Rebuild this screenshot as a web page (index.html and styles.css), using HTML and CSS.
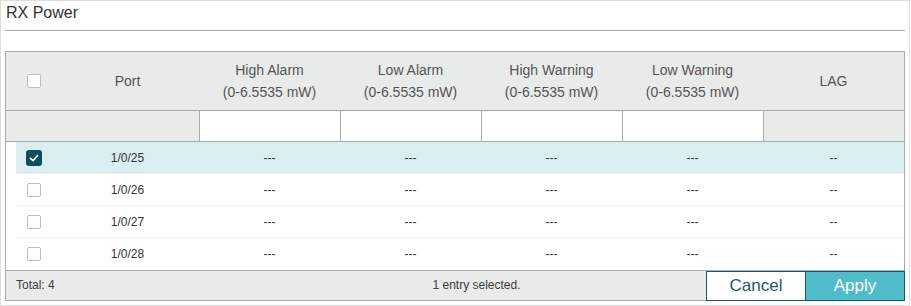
FILE: index.html
```html
<!DOCTYPE html>
<html lang="en">
  <head>
    <meta charset="UTF-8" />
    <meta name="viewport" content="width=device-width, initial-scale=1.0" />
    <title>RX Power</title>
    <link rel="stylesheet" href="styles.css">
  </head>
  <body>
    <div class="panel">
      <div class="panel-title">RX Power</div>

      <div class="grid">
        <div class="row head">
          <div class="cell chk"><span class="box"></span></div>
          <div class="cell">Port</div>
          <div class="cell">High Alarm<br />(0-6.5535 mW)</div>
          <div class="cell">Low Alarm<br />(0-6.5535 mW)</div>
          <div class="cell">High Warning<br />(0-6.5535 mW)</div>
          <div class="cell">Low Warning<br />(0-6.5535 mW)</div>
          <div class="cell">LAG</div>
        </div>

        <div class="row filter">
          <div class="cell blank"></div>
          <div class="cell field"><input type="text" /></div>
          <div class="cell field"><input type="text" /></div>
          <div class="cell field"><input type="text" /></div>
          <div class="cell field"><input type="text" /></div>
          <div class="cell field off"></div>
        </div>

        <div class="rows">
          <div class="row item selected">
            <div class="cell chk">
              <span class="box checked">
                <svg viewBox="0 0 16 16" width="16" height="16"><polyline points="4.5,8.3 7,10.6 11.5,5.6" fill="none" stroke="#fff" stroke-width="1.6" stroke-linecap="round" stroke-linejoin="round"/></svg>
              </span>
            </div>
            <div class="cell">1/0/25</div>
            <div class="cell">---</div>
            <div class="cell">---</div>
            <div class="cell">---</div>
            <div class="cell">---</div>
            <div class="cell">--</div>
          </div>
          <div class="row item">
            <div class="cell chk"><span class="box"></span></div>
            <div class="cell">1/0/26</div>
            <div class="cell">---</div>
            <div class="cell">---</div>
            <div class="cell">---</div>
            <div class="cell">---</div>
            <div class="cell">--</div>
          </div>
          <div class="row item">
            <div class="cell chk"><span class="box"></span></div>
            <div class="cell">1/0/27</div>
            <div class="cell">---</div>
            <div class="cell">---</div>
            <div class="cell">---</div>
            <div class="cell">---</div>
            <div class="cell">--</div>
          </div>
          <div class="row item">
            <div class="cell chk"><span class="box"></span></div>
            <div class="cell">1/0/28</div>
            <div class="cell">---</div>
            <div class="cell">---</div>
            <div class="cell">---</div>
            <div class="cell">---</div>
            <div class="cell">--</div>
          </div>
        </div>

        <div class="foot">
          <div class="total">Total: 4</div>
          <div class="status">1 entry selected.</div>
          <button type="button" class="btn cancel">Cancel</button>
          <button type="button" class="btn apply">Apply</button>
        </div>
      </div>
    </div>
  </body>
</html>
```

FILE: styles.css
```css
body {
  margin: 0;
  padding: 0;
  background: white;
  font-family: "Liberation Sans", Arial, sans-serif;
}
.panel {
  width: 910px;
  height: 306px;
  box-sizing: border-box;
  border: 1px solid rgb(222, 222, 222);
  padding: 0 4px;
}
.panel-title {
  height: 29px;
  line-height: 24px;
  font-size: 16px;
  color: rgb(51, 51, 51);
  padding-left: 1px;
  border-bottom: 1px solid rgb(170, 170, 170);
}
.grid {
  margin-top: 20px;
  width: 900px;
  box-sizing: border-box;
  border: 1px solid rgb(170, 170, 170);
  border-bottom: none;
}
.row {
  display: grid;
  grid-template-columns: 50px 143px repeat(4, 141px) 141px;
}
.cell {
  display: flex;
  align-items: center;
  justify-content: center;
  text-align: center;
}
.chk {
  justify-content: flex-start;
  padding-left: 21px;
}
.head {
  height: 58px;
  background: rgb(233, 234, 234);
  border-bottom: 1px solid rgb(170, 170, 170);
  font-size: 14px;
  line-height: 22px;
  color: rgb(85, 85, 85);
}
.filter {
  grid-template-columns: 193px repeat(4, 141px) 141px;
  height: 30px;
  background: rgb(233, 234, 234);
  border-bottom: 1px solid rgb(170, 170, 170);
}
.field {
  border-left: 1px solid rgb(170, 170, 170);
  background: white;
}
.field input {
  width: 100%;
  height: 100%;
  border: none;
  outline: none;
  background: transparent;
  padding: 0;
}
.field.off {
  background: rgb(233, 234, 234);
}
.item {
  margin-left: 10px;
  grid-template-columns: 40px 143px repeat(4, 141px) 141px;
  height: 32px;
  box-sizing: border-box;
  border-bottom: 1px solid rgb(242, 242, 242);
  font-size: 12px;
  color: rgb(51, 51, 51);
}
.item:last-child {
  border-bottom: none;
}
.item .chk {
  padding-left: 11px;
}
.item.selected {
  background: rgb(217, 238, 240);
}
.box {
  display: block;
  width: 14px;
  height: 14px;
  box-sizing: border-box;
  border: 1px solid rgb(190, 190, 190);
  border-radius: 2px;
  background: white;
}
.box.checked {
  width: 16px;
  height: 16px;
  margin-left: -1px;
  border: none;
  border-radius: 3px;
  background: rgb(14, 77, 92);
}
.box svg {
  display: block;
}
.foot {
  display: flex;
  align-items: flex-start;
  height: 29px;
  background: rgb(233, 234, 234);
  border-top: 1px solid rgb(170, 170, 170);
  border-bottom: 1px solid rgb(170, 170, 170);
  font-size: 12px;
  color: rgb(60, 60, 60);
}
.total {
  width: 231px;
  padding-left: 10px;
  line-height: 29px;
}
.status {
  flex: 1;
  text-align: center;
  line-height: 29px;
}
.btn {
  height: 30px;
  margin: 0;
  padding: 0;
  box-sizing: border-box;
  border: 1px solid rgb(27, 90, 99);
  font-family: "Liberation Sans", Arial, sans-serif;
  font-size: 17px;
  cursor: pointer;
}
.cancel {
  width: 100px;
  background: white;
  color: rgb(30, 92, 101);
}
.apply {
  width: 99px;
  margin-right: -1px;
  border-left: none;
  background: rgb(78, 189, 201);
  color: white;
}
```
